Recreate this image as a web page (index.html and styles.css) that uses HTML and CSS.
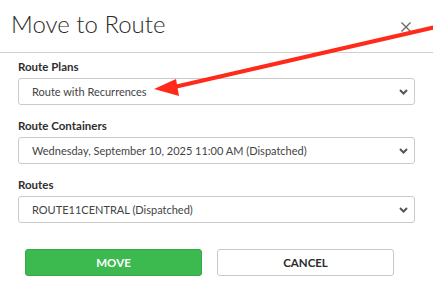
FILE: index.html
```html
<!DOCTYPE html>
<html lang="en">
<head>
	<meta charset="UTF-8">
	<title>Move to Route</title>
	<link rel="stylesheet" href="styles.css">
</head>
<body>
<div class="modal">
	<!-- header -->
	<div class="modal-header">
		<h2 class="modal-title">Move to Route</h2>
		<button class="close-button" aria-label="Close">
			<svg width="12" height="10" viewBox="0 0 12 10"><path d="M1.5 0.5 L10.5 9.5 M10.5 0.5 L1.5 9.5" stroke="#6b6b6b" stroke-width="1.4" fill="none"/></svg>
		</button>
	</div>

	<!-- form -->
	<div class="modal-body">
		<label class="field-label">Route Plans</label>
		<div class="select-wrap">
			<select class="field-select">
				<option>Route with Recurrences</option>
			</select>
			<svg class="chevron" width="9" height="6" viewBox="0 0 9 6"><path d="M1 1 L4.5 4.5 L8 1" stroke="#555" stroke-width="2" fill="none"/></svg>
		</div>

		<label class="field-label">Route Containers</label>
		<div class="select-wrap">
			<select class="field-select">
				<option>Wednesday, September 10, 2025 11:00 AM (Dispatched)</option>
			</select>
			<svg class="chevron" width="9" height="6" viewBox="0 0 9 6"><path d="M1 1 L4.5 4.5 L8 1" stroke="#555" stroke-width="2" fill="none"/></svg>
		</div>

		<label class="field-label">Routes</label>
		<div class="select-wrap">
			<select class="field-select">
				<option>ROUTE11CENTRAL (Dispatched)</option>
			</select>
			<svg class="chevron" width="9" height="6" viewBox="0 0 9 6"><path d="M1 1 L4.5 4.5 L8 1" stroke="#555" stroke-width="2" fill="none"/></svg>
		</div>

		<div class="modal-actions">
			<button class="btn btn-move">MOVE</button>
			<button class="btn btn-cancel">CANCEL</button>
		</div>
	</div>

	<!-- red annotation arrow -->
	<svg class="annotation" width="433" height="292" viewBox="0 0 433 292">
		<line x1="440" y1="26" x2="170" y2="88" stroke="#ff2a1a" stroke-width="4"/>
		<polygon points="154,89 176,79 179,96" fill="#ff2a1a"/>
	</svg>
</div>
</body>
</html>
```

FILE: styles.css
```css
body {
	margin: 0;
	font-family: Lato, "Open Sans", Arial, sans-serif;
	background-color: #fff;
	color: #333;
}
.modal {
	position: relative;
	width: 433px;
	height: 292px;
	overflow: hidden;
}
.modal-header {
	height: 43px;
	padding-top: 9px;
	border-bottom: 1px solid #cfcfcf;
	display: flex;
	justify-content: space-between;
	align-items: flex-start;
}
.modal-title {
	margin: 0 0 0 11px;
	font-size: 24px;
	font-weight: 300;
	line-height: 30px;
	color: #2b2b2b;
}
.close-button {
	margin: 13px 21px 0 0;
	padding: 0;
	border: none;
	background: none;
	display: flex;
}
.modal-body {
	padding: 6px 18px 0 18px;
	display: flex;
	flex-direction: column;
}
.field-label {
	font-size: 11.5px;
	font-weight: 700;
	line-height: 16px;
	color: #2f2f2f;
	margin-bottom: 3px;
}
.select-wrap {
	position: relative;
	margin-bottom: 13px;
}
.field-select {
	appearance: none;
	-webkit-appearance: none;
	width: 100%;
	height: 27px;
	padding: 0 0 0 13px;
	font-family: Lato, "Open Sans", Arial, sans-serif;
	font-size: 11px;
	color: #444;
	background-color: #fff;
	border: 1px solid #cacaca;
	border-radius: 3px;
}
.chevron {
	position: absolute;
	right: 7px;
	top: 11px;
	pointer-events: none;
}
.modal-actions {
	display: flex;
	gap: 15px;
	margin: 13px 0 0 7px;
}
.btn {
	width: 177px;
	height: 27px;
	font-family: Lato, "Open Sans", Arial, sans-serif;
	font-size: 11.5px;
	font-weight: 700;
	border-radius: 3px;
	cursor: pointer;
}
.btn-move {
	background-color: #3cb94f;
	border: 1px solid #37a848;
	color: #fff;
}
.btn-cancel {
	background-color: #fff;
	border: 1px solid #c8c8c8;
	color: #2b2b2b;
}
.annotation {
	position: absolute;
	left: 0;
	top: 0;
	pointer-events: none;
}
```
